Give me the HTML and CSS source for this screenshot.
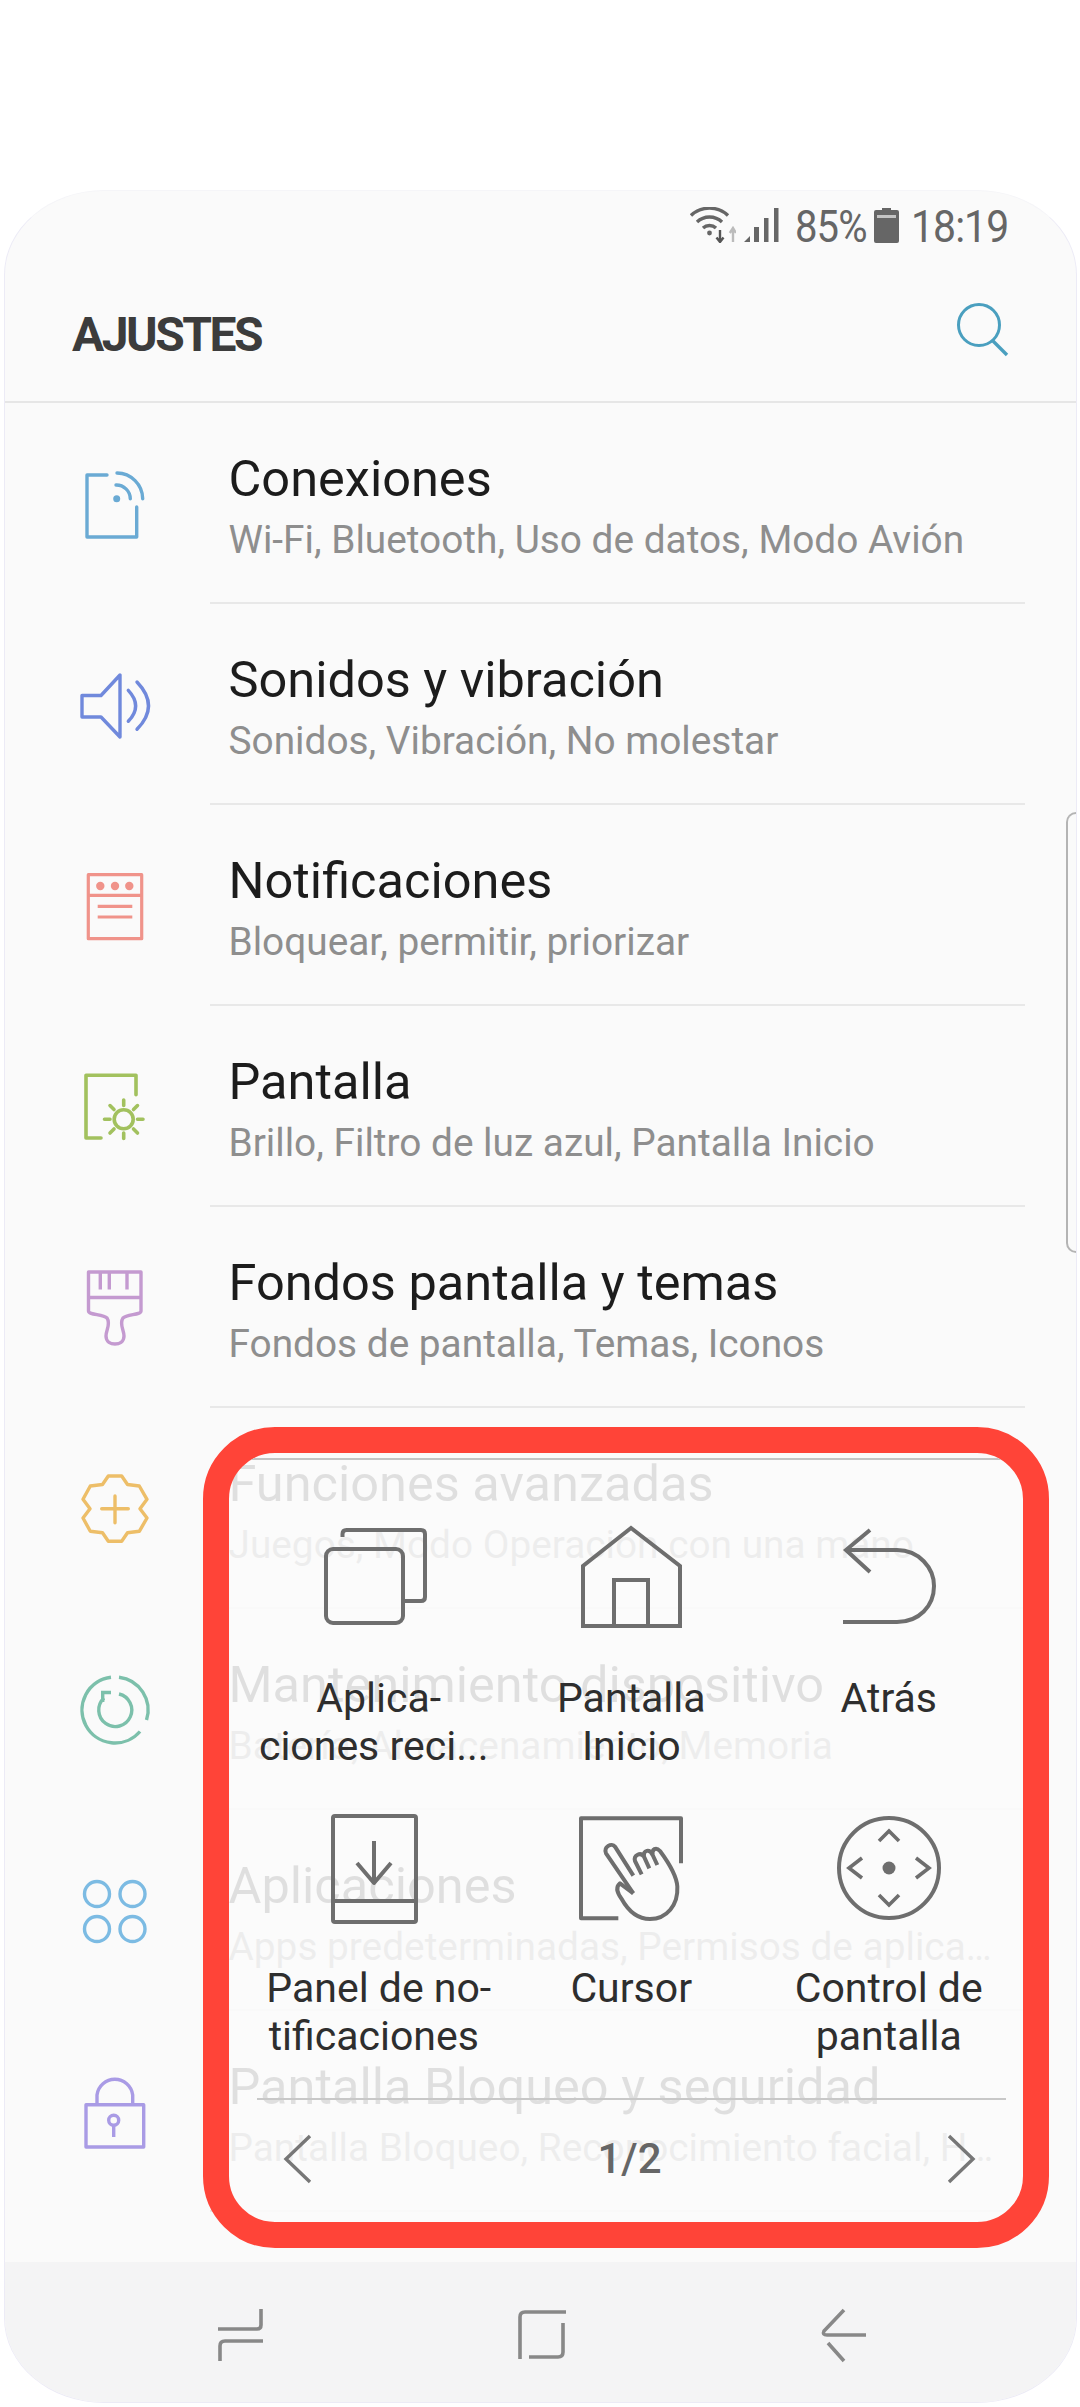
FILE: index.html
```html
<!DOCTYPE html>
<html lang="es">
<head>
<meta charset="utf-8">
<title>Ajustes</title>
<link rel="stylesheet" href="styles.css">
</head>
<body>
<main class="phone">
  <div class="status">
    <svg class="st-wifi" width="46" height="36" viewBox="0 0 46 36"><g fill="none" stroke="#666" stroke-width="3.4"><path d="M1 8.500A27 27 0 0 1 38 8.500"/><path d="M7 15A18 18 0 0 1 32 15"/><path d="M13 21A9.500 9.500 0 0 1 26 21"/></g><circle cx="19.500" cy="26" r="2.400" fill="#666"/><path d="M30 23V34M26.500 30.500L30 35L33.500 30.500" fill="none" stroke="#555" stroke-width="2.400"/><path d="M43 35V22M39.800 26L43 21L46 26" fill="none" stroke="#bbb" stroke-width="2.400"/></svg>
    <svg class="st-signal" width="37" height="36" viewBox="0 0 37 36"><path d="M1 35L7 29V35Z M11 20H16V35H11Z M21 11H25.500V35H21Z M31 1H35.500V35H31Z" fill="#666"/></svg>
    <span class="st-text">85%</span>
    <svg class="st-batt" width="25" height="36" viewBox="0 0 25 36"><path d="M2 3H8V1H17V3H23Q25 3 25 5V34Q25 36 23 36H2Q0 36 0 34V5Q0 3 2 3Z" fill="#666"/><rect x="3" y="8" width="19" height="3" fill="#c4c4c4"/></svg>
    <span class="st-text st-time">18:19</span>
  </div>
  <header class="head">
    <h1 class="head-title">AJUSTES</h1>
    <svg class="head-search" width="60" height="60" viewBox="0 0 60 60"><circle cx="24" cy="24" r="20.500" fill="none" stroke="#4a9fbf" stroke-width="3"/><path d="M37 39L52 54" stroke="#4a9fbf" stroke-width="3.400" fill="none"/></svg>
  </header>
  <section class="list">
    <div class="row">
      <svg class="ic" viewBox="0 0 100 100"><g fill="none" stroke="#6aaad4" stroke-width="3.400" stroke-linecap="round" stroke-linejoin="round"><path d="M42 21H22V83H71.700V53"/><path d="M52 19A26 26 0 0 1 77.700 44.700"/><path d="M51 31A14 14 0 0 1 65.300 44.700"/></g><circle cx="51.700" cy="44.700" r="3.500" fill="#6aaad4"/></svg>
      <div class="row-text"><div class="row-title">Conexiones</div><div class="row-sub">Wi-Fi, Bluetooth, Uso de datos, Modo Avión</div></div>
    </div>
    <div class="row">
      <svg class="ic" viewBox="0 0 100 100"><g fill="none" stroke="#7089dc" stroke-width="3.400" stroke-linecap="round" stroke-linejoin="round"><path d="M17 40.500H36L55 20V82L36 62H17Z"/><path d="M63.300 35.300Q78 51 63.300 66.300"/><path d="M72 27Q95 51 72 74.300"/></g></svg>
      <div class="row-text"><div class="row-title">Sonidos y vibración</div><div class="row-sub">Sonidos, Vibración, No molestar</div></div>
    </div>
    <div class="row">
      <svg class="ic" viewBox="0 0 100 100"><g fill="none" stroke="#f0938a" stroke-width="3.200" stroke-linejoin="round"><rect x="23.300" y="18.700" width="53.400" height="64"/><path d="M23.300 39.300H76.700M32.700 50.300H67.300M32.700 61H67.300"/></g><g fill="#f0938a"><circle cx="35.300" cy="30" r="4.200"/><circle cx="50" cy="30" r="4.200"/><circle cx="64.300" cy="30" r="4.200"/></g></svg>
      <div class="row-text"><div class="row-title">Notificaciones</div><div class="row-sub">Bloquear, permitir, priorizar</div></div>
    </div>
    <div class="row">
      <svg class="ic" viewBox="0 0 100 100"><g fill="none" stroke="#a2c15e" stroke-width="3.600" stroke-linecap="round" stroke-linejoin="round"><path d="M36 81H21V18.300H71V37.700"/><circle cx="58.700" cy="62.300" r="9.500"/><path d="M58.700 43V48.500M58.700 76V81.500M39.500 62.300H45M72.500 62.300H78M45 48.600L49 52.600M68.500 72L72.500 76M45 76L49 72M68.500 52.600L72.500 48.600"/></g></svg>
      <div class="row-text"><div class="row-title">Pantalla</div><div class="row-sub">Brillo, Filtro de luz azul, Pantalla Inicio</div></div>
    </div>
    <div class="row">
      <svg class="ic" viewBox="0 0 100 100"><g fill="none" stroke="#c49ad0" stroke-width="3.400" stroke-linejoin="round"><path d="M23.500 14H76V53C76 57 62 56 58 60C54 66 59 72 59 78C59 84 54 86 50 86C46 86 41 84 41 78C41 72 46 66 42 60C38 56 23.500 57 23.500 53Z"/><path d="M23.500 39.500H76M35.300 14V31.500M44.300 14V31.500M62 14V31.500"/></g></svg>
      <div class="row-text"><div class="row-title">Fondos pantalla y temas</div><div class="row-sub">Fondos de pantalla, Temas, Iconos</div></div>
    </div>
    <div class="row">
      <svg class="ic" viewBox="0 0 100 100"><g fill="none" stroke="#edbe68" stroke-width="3.400" stroke-linecap="round" stroke-linejoin="round"><path d="M43.300 17H56.700L62.500 25.500L74.300 27L82 40.300L75 49.700L82 59L74.300 72.300L62.500 73.800L56.700 82.300H43.300L37.500 73.800L25.300 72.300L18 59L25 49.700L18 40.300L25.300 27L37.500 25.500Z"/><path d="M36.700 49.700H63.300M50 37V63.700"/></g></svg>
      <div class="row-text"><div class="row-title">Funciones avanzadas</div><div class="row-sub">Juegos, Modo Operación con una mano</div></div>
    </div>
    <div class="row">
      <svg class="ic" viewBox="0 0 100 100"><g fill="none" stroke="#7cc0ab" stroke-width="3.400"><path d="M54 17.200A33 33 0 0 1 81.500 60"/><path d="M75 71.500A33 33 0 1 1 46 17.200"/><path d="M54 34A16.500 16.500 0 1 1 39 38"/><path d="M36 32.500H46M37.700 32.500V42"/></g></svg>
      <div class="row-text"><div class="row-title">Mantenimiento dispositivo</div><div class="row-sub">Batería, Almacenamiento, Memoria</div></div>
    </div>
    <div class="row">
      <svg class="ic" viewBox="0 0 100 100"><g fill="none" stroke="#7cbbe3" stroke-width="3.400"><circle cx="32" cy="33" r="12.500"/><circle cx="67.500" cy="33" r="12.500"/><circle cx="32" cy="68" r="12.500"/><circle cx="67.500" cy="68" r="12.500"/></g></svg>
      <div class="row-text"><div class="row-title">Aplicaciones</div><div class="row-sub">Apps predeterminadas, Permisos de aplicaciones</div></div>
    </div>
    <div class="row">
      <svg class="ic" viewBox="0 0 100 100"><g fill="none" stroke="#a99be5" stroke-width="3.400" stroke-linejoin="round"><rect x="21" y="42.700" width="57.700" height="42.300"/><path d="M32 42V33A18 18 0 0 1 67.700 33V42"/><circle cx="48.700" cy="58.300" r="5"/><path d="M48.700 63.300V75"/></g></svg>
      <div class="row-text"><div class="row-title">Pantalla Bloqueo y seguridad</div><div class="row-sub">Pantalla Bloqueo, Reconocimiento facial, Huellas</div></div>
    </div>
  </section>
  <nav class="nav">
    <svg class="nav-ic" width="64" height="64" viewBox="0 0 64 64"><path d="M9 26H48Q52 26 52 22V6M54 38H16Q11 38 11 43V58" fill="none" stroke="#888" stroke-width="3.600"/></svg>
    <svg class="nav-ic" width="64" height="64" viewBox="0 0 64 64"><path d="M55 9H14Q9 9 9 14V56M18 54H47Q52 54 52 49V20" fill="none" stroke="#888" stroke-width="3.600"/></svg>
    <svg class="nav-ic" width="64" height="64" viewBox="0 0 64 64"><path d="M31 7L11 28Q9 32 14 32H53M15 40L31 58" fill="none" stroke="#888" stroke-width="3.600"/></svg>
  </nav>
  <div class="side-key"></div>
  <aside class="sheet">
    <div class="sheet-line"></div>
    <div class="grid">
      <div class="cell">
        <svg class="cell-ic" viewBox="0 0 120 120"><g fill="none" stroke="#6e6e6e" stroke-width="4" stroke-linejoin="round"><path d="M28.500 19V16Q28.500 12 32.500 12H107Q111 12 111 16V79Q111 83 107 83H89"/><rect x="12" y="31" width="77" height="74" rx="7"/></g></svg>
        <div class="cell-label"><span class="cell-hy">Aplica-</span><br>ciones reci...</div>
      </div>
      <div class="cell">
        <svg class="cell-ic" viewBox="0 0 120 120"><g fill="none" stroke="#6e6e6e" stroke-width="4"><path d="M60 10L12 48V108H109V48Z"/><path d="M43 108V62H77V108"/></g></svg>
        <div class="cell-label">Pantalla<br>Inicio</div>
      </div>
      <div class="cell">
        <svg class="cell-ic" viewBox="0 0 120 120"><g fill="none" stroke="#6e6e6e" stroke-width="4"><path d="M41 12L17 32L41 54"/><path d="M17 32H68C90 32 105 50 105 68C105 88 90 104 68 104H14"/></g></svg>
        <div class="cell-label">Atrás</div>
      </div>
      <div class="cell">
        <svg class="cell-ic" viewBox="0 0 120 120"><g fill="none" stroke="#6e6e6e" stroke-width="4" stroke-linejoin="round"><rect x="19" y="8" width="83" height="106" rx="2"/><path d="M19 93H102"/><path d="M60 33V74M43 55L60 75L77 55"/></g></svg>
        <div class="cell-label"><span class="cell-hy">Panel de no-</span><br>tificaciones</div>
      </div>
      <div class="cell">
        <svg class="cell-ic" viewBox="0 0 360 360"><g fill="none" stroke="#6e6e6e" stroke-width="12" stroke-linejoin="round" stroke-linecap="butt" transform="translate(-3 -9)"><path d="M145 340H33V40H333V175"/><path d="M190 265L150 235C138 245 140 262 155 282C175 318 205 342 240 342C290 342 325 300 322 245C320 210 290 165 270 138C258 125 245 132 248 150L262 180M248 150C238 130 220 135 222 155L238 190M222 155C212 140 190 150 195 168L215 208"/><path d="M190 212L135 125C125 112 100 125 108 145L190 265"/></g></svg>
        <div class="cell-label">Cursor</div>
      </div>
      <div class="cell">
        <svg class="cell-ic" viewBox="0 0 120 120"><g fill="none" stroke="#6e6e6e" stroke-width="4"><circle cx="60" cy="60" r="50"/><path d="M50 33L60 23L70 33M50 87L60 97L70 87M33 50L20 60L33 70M87 50L100 60L87 70" stroke-width="3.600"/></g><circle cx="60" cy="60" r="6.500" fill="#6e6e6e"/></svg>
        <div class="cell-label">Control de<br>pantalla</div>
      </div>
    </div>
    <div class="pager">
      <svg class="pager-ic" width="30" height="50" viewBox="0 0 30 50"><path d="M27 2L3 25L27 48" fill="none" stroke="#777" stroke-width="3.400"/></svg>
      <span class="pager-text">1/2</span>
      <svg class="pager-ic" width="30" height="50" viewBox="0 0 30 50"><path d="M3 2L27 25L3 48" fill="none" stroke="#777" stroke-width="3.400"/></svg>
    </div>
  </aside>
</main>
</body>
</html>
```
FILE: styles.css
```css
* { box-sizing: border-box; }
html, body { margin: 0; padding: 0; background: #fff; }
body { font-family: Roboto, "Liberation Sans", sans-serif; height: 2407px; padding-top: 190px; overflow: hidden; }

.phone {
  position: relative;
  margin-left: 4px;
  width: 1073px;
  height: 2213px;
  display: flex;
  flex-direction: column;
  background: #fafafa;
  border: 1px solid #ecebf6;
  border-top-color: #f5f5f8;
  border-radius: 100px / 85px;
  overflow: hidden;
}

.status { height: 80px; flex: none; display: flex; align-items: flex-start; justify-content: flex-end; padding: 16px 68px 0 0; }
.st-wifi { margin-right: 7px; }
.st-signal { margin-right: 15px; }
.st-text { font-size: 44px; line-height: 40px; color: #666; letter-spacing: -1px; display: inline-block; transform: scaleX(.91); transform-origin: left; width: 72px; white-space: nowrap; }
.st-batt { margin: 0 12px 0 7px; }
.st-time { width: 97px; transform: scaleX(.93); }

.head { height: 132px; flex: none; display: flex; align-items: center; justify-content: space-between; padding: 0 61px 3px 67px; border-bottom: 2px solid #e6e6e6; }
.head-title { margin: 0; font-size: 48px; font-weight: 700; color: #3c3c3c; letter-spacing: -2.5px; }
.head-search { margin-top: -7px; }

.list { flex: 1; overflow: hidden; }
.row { height: 201px; display: flex; align-items: center; padding-left: 60px; }
.ic { width: 100px; height: 100px; flex: none; }
.row-text { margin-left: 45px; width: 815px; height: 201px; border-bottom: 2px solid #e8e8e8; padding: 49px 0 0 18.500px; }
.row-title { font-size: 50.5px; line-height: 54px; color: #1c1c1c; white-space: nowrap; }
.row-sub { font-size: 38.800px; line-height: 46px; margin-top: 11px; color: #8e8e8e; width: 772px; white-space: nowrap; overflow: hidden; text-overflow: ellipsis; }

.nav { height: 140px; flex: none; background: #f4f4f5; display: grid; grid-template-columns: repeat(3, 302px); justify-content: center; justify-items: center; align-items: center; padding: 6px 0 0 5px; }

.side-key { position: absolute; right: 0; top: 621px; width: 10px; height: 441px; border: 2px solid #b4b4b4; border-right: 0; border-radius: 16px 0 0 16px; }

.sheet {
  position: absolute;
  left: 198px;
  top: 1236px;
  width: 846px;
  height: 821px;
  border: 26px solid #ff4438;
  border-radius: 72px;
  background: rgba(250, 250, 250, .88);
  overflow: hidden;
  display: flex;
  flex-direction: column;
}
.sheet-line { height: 2px; margin-top: 5px; background: #c4c4c4; flex: none; }
.grid { display: grid; grid-template-columns: repeat(3, 257.5px); grid-auto-rows: 290px; justify-content: start; padding: 58px 0 0 16px; flex: none; }
.cell { display: flex; flex-direction: column; align-items: center; }
.cell-ic { width: 120px; height: 120px; flex: none; }
.cell-label { margin-top: 36px; font-size: 41px; line-height: 48px; text-align: center; color: #2e2e2e; white-space: nowrap; }
.cell-hy { margin-left: 10px; }

.pager { margin: auto 17px 0 28px; height: 129px; border-top: 2px solid #c8c8c8; display: flex; align-items: center; justify-content: space-between; padding: 0 30px 10px 26px; flex: none; }
.pager-text { font-size: 42px; font-weight: 500; color: #666; }
```
